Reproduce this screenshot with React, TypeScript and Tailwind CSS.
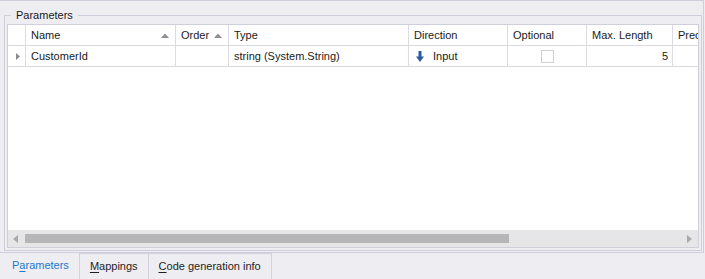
import type { ReactNode } from "react";

const font = { fontFamily: '"Liberation Sans", Arial, sans-serif' };

type Col = { title: string; width: string; sort?: boolean };

const columns: Col[] = [
  { title: "Name", width: "w-[150px]", sort: true },
  { title: "Order", width: "w-[53px]", sort: true },
  { title: "Type", width: "w-[180px]" },
  { title: "Direction", width: "w-[99px]" },
  { title: "Optional", width: "w-[79px]" },
  { title: "Max. Length", width: "w-[86px]" },
  { title: "Precision", width: "w-[80px]" },
];

function SortUp() {
  return (
    <svg width="8" height="5" viewBox="0 0 8 5" className="shrink-0 mr-[1px]">
      <path d="M0 5 L4 0.5 L8 5 Z" fill="#8e8e94" />
    </svg>
  );
}

function DownArrow() {
  return (
    <svg width="8" height="11" viewBox="0 0 8 11" className="shrink-0">
      <rect x="2.5" y="0" width="3" height="6" fill="#2a5aa8" />
      <path d="M0 5.5 L8 5.5 L4 11 Z" fill="#2a5aa8" />
    </svg>
  );
}

function Cell({ width, children, className = "" }: { width: string; children?: ReactNode; className?: string }) {
  return (
    <div className={`${width} shrink-0 h-full flex items-center border-r border-[#dcdbe4] px-[5px] overflow-hidden whitespace-nowrap ${className}`}>
      {children}
    </div>
  );
}

function Tab({ active, children }: { active?: boolean; children: ReactNode }) {
  return (
    <div
      className={`h-full flex items-center pb-[1px] ${
        active ? "pl-[12px] pr-[10px] text-[#1c78d0]" : "px-[10px] border-t border-r border-[#d3d2dc] text-[#1e1e1e]"
      }`}
    >
      {children}
    </div>
  );
}

export default function App() {
  return (
    <div className="w-[705px] h-[279px] bg-[#eeedf2] text-[11px] text-[#1a1a1a] flex flex-col overflow-hidden" style={font}>
      {/* Panel */}
      <div className="w-[704px] h-[253px] shrink-0 border-t border-r border-b border-[#cfcedb] pt-[14px] pl-[4px] pr-[1px] pb-[1px] flex flex-col">
        <div className="relative flex-1 min-h-0 border border-[#cfcedb] px-[2px] pt-[8px] pb-[2px] flex flex-col">
          <span className="absolute left-[6px] top-[-8px] px-[5px] leading-[14px] bg-[#eeedf2]">Parameters</span>
          <div className="flex-1 min-h-0 bg-white border border-[#cfcedb] flex flex-col overflow-hidden">
            {/* Header */}
            <div className="h-[21px] shrink-0 flex border-b border-[#dcdbe4]">
              <Cell width="w-[18px]" className="px-0" />
              {columns.map((c) => (
                <Cell key={c.title} width={c.width} className="justify-between">
                  <span>{c.title}</span>
                  {c.sort && <SortUp />}
                </Cell>
              ))}
            </div>
            {/* Row */}
            <div className="h-[21px] shrink-0 flex border-b border-[#dcdbe4]">
              <Cell width="w-[18px]" className="px-0 justify-center">
                <svg width="4" height="7" viewBox="0 0 4 7" className="ml-[2px]">
                  <path d="M0 0 L4 3.5 L0 7 Z" fill="#8a8a90" />
                </svg>
              </Cell>
              <Cell width="w-[150px]">CustomerId</Cell>
              <Cell width="w-[53px]" />
              <Cell width="w-[180px]">string (System.String)</Cell>
              <Cell width="w-[99px]" className="gap-[9px] pl-[7px]">
                <DownArrow />
                <span>Input</span>
              </Cell>
              <Cell width="w-[79px]" className="justify-center">
                <div className="w-[13px] h-[13px] border border-[#cfcfd4] bg-white" />
              </Cell>
              <Cell width="w-[86px]" className="justify-end pr-[4px]">5</Cell>
              <Cell width="w-[80px]" />
            </div>
            <div className="flex-1" />
            {/* Horizontal scrollbar */}
            <div className="h-[17px] shrink-0 bg-[#e6e6e8] flex items-center px-[4px]">
              <svg width="5" height="8" viewBox="0 0 5 8" className="shrink-0 ml-[1px]">
                <path d="M5 0 L0 4 L5 8 Z" fill="#a9a9ad" />
              </svg>
              <div className="ml-[7px] w-[484px] h-[9px] bg-[#b6b6b8]" />
              <div className="flex-1" />
              <svg width="5" height="8" viewBox="0 0 5 8" className="shrink-0 mr-[2px]">
                <path d="M0 0 L5 4 L0 8 Z" fill="#a9a9ad" />
              </svg>
            </div>
          </div>
        </div>
      </div>
      {/* Tabs */}
      <div className="flex-1 flex">
        <Tab active>
          <span>
            P<span className="underline underline-offset-2">a</span>rameters
          </span>
        </Tab>
        <div className="border-l border-[#d3d2dc] h-full" />
        <Tab>
          <span>
            <span className="underline underline-offset-2">M</span>appings
          </span>
        </Tab>
        <Tab>
          <span>
            <span className="underline underline-offset-2">C</span>ode generation info
          </span>
        </Tab>
      </div>
    </div>
  );
}
